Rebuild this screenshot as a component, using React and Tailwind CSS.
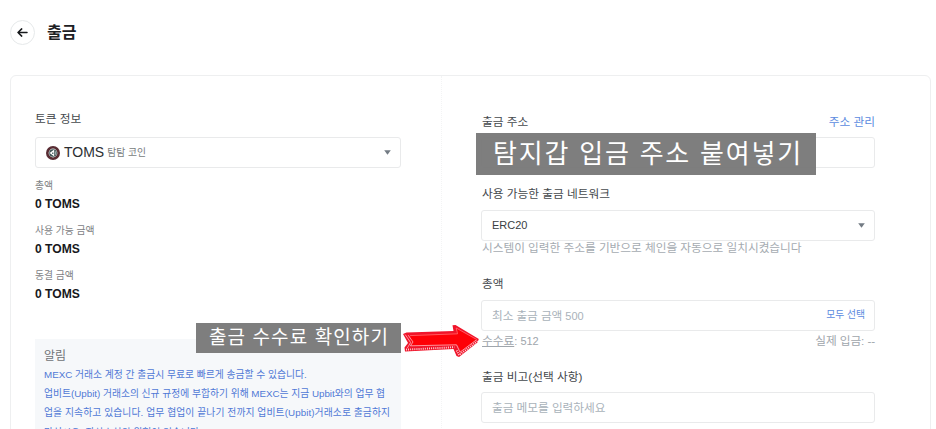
import React from "react";

const balances = [
  { label: "총액", value: "0 TOMS" },
  { label: "사용 가능 금액", value: "0 TOMS" },
  { label: "동결 금액", value: "0 TOMS" },
];

function Caret() {
  return (
    <svg width="7" height="5" viewBox="0 0 7 5" className="shrink-0">
      <path d="M0.2 0.3h6.6L3.5 4.8z" fill="#737b84" />
    </svg>
  );
}

function TokenLogo() {
  return (
    <svg width="14" height="14" viewBox="0 0 14 14" className="shrink-0">
      <circle cx="7" cy="7" r="7" fill="#582c33" />
      <circle cx="7" cy="7" r="4.4" fill="#e3e8e8" />
      <circle cx="7" cy="7" r="3.8" fill="#3e5455" />
      <path d="M3.6 7.1 8.2 3.6v6.8z" fill="#fff" />
      <path d="M6.2 6.6h1.2v1.4H6.2z" fill="#3e5455" />
      <path d="M9.4 5.3v3.5" stroke="#b9c6c6" strokeWidth="0.8" />
    </svg>
  );
}

function Field({ children }) {
  return (
    <div className="flex h-[31px] items-center justify-between rounded-[3px] border border-[#e9eaeb] bg-white pl-[10px] pr-[9px] text-[11.7px]">
      {children}
    </div>
  );
}

function RedArrow() {
  return (
    <svg
      width="78"
      height="36"
      viewBox="0 0 78 36"
      className="absolute left-[402px] top-[323px]"
    >
      <path
        d="M1 11 4.5 9.5 51.5 8 50.5 2.2 53.5 2 76.8 16 75.5 19.5 57 34 54.5 33 51.5 26 3 28.6 2.5 24.5 6 20z"
        fill="#f0142a"
      />
      <path d="M8 12 54.5 10.2 54 4.8 74.8 16.4 59 28.5 56 22.2 10 22.8z" fill="#fe0006" />
      <path
        d="M3.2 11.6 8.6 19.5 5.2 25.2M6.2 12.2 11 19 8.4 22.8 54.5 21.8 58 29.2 74.5 16.8"
        fill="none"
        stroke="#ffb9be"
        strokeWidth="0.8"
      />
      <path
        d="M8 12.6 55.5 10.8 54.2 5 74.5 16.4"
        fill="none"
        stroke="#ff8087"
        strokeWidth="0.7"
      />
      <path
        d="M4 26.6 52.5 24.2M54.6 27.5 57 32 75.6 18.2"
        fill="none"
        stroke="#ffe3e5"
        strokeWidth="1.9"
        strokeDasharray="0.9 1.2"
      />
    </svg>
  );
}

export default function App() {
  return (
    <div className="relative h-[429px] w-[936px] overflow-hidden whitespace-nowrap bg-white font-['Liberation_Sans','Noto_Sans_CJK_KR',sans-serif] text-[#45494d]">
      <header className="flex h-[75px] items-start pl-[10px] pt-5">
        <button className="flex h-[25px] w-[25px] items-center justify-center rounded-full border border-[#e6e9ea]">
          <svg width="11" height="9" viewBox="0 0 11 9" fill="none">
            <path
              d="M10 4.5H1M4.7 0.9 1 4.5l3.7 3.6"
              stroke="#17191c"
              strokeWidth="1.5"
              strokeLinecap="round"
              strokeLinejoin="round"
            />
          </svg>
        </button>
        <h1 className="ml-3 text-[16px] font-bold leading-[26px] text-[#1d2023]">출금</h1>
      </header>

      <main className="ml-[10px] flex h-[380px] w-[921px] rounded-md border border-[#eeeff0]">
        <section className="w-[431px] border-r border-dotted border-[#f3f4f5] pl-6 pr-10 pt-[33px]">
          <h2 className="h-5 text-[11.7px] leading-5">토큰 정보</h2>
          <div className="mt-2">
            <Field>
              <div className="flex items-center">
                <TokenLogo />
                <span className="ml-1 text-[14px] text-[#2b2e31]">TOMS</span>
                <span className="ml-[3px] pt-px text-[9.8px] text-[#777c80]">탐탐 코인</span>
              </div>
              <Caret />
            </Field>
          </div>

          <div className="mt-[9px] flex flex-col gap-[9px]">
            {balances.map((b) => (
              <div key={b.label}>
                <div className="h-[18px] text-[9.8px] leading-[18px] text-[#7d8184]">{b.label}</div>
                <div className="h-[18px] text-[12.1px] font-bold leading-[18px] text-[#17191c]">
                  {b.value}
                </div>
              </div>
            ))}
          </div>

          <div className="mt-9 h-[120px] bg-[#f6f8fa] px-[9px] pt-2">
            <h3 className="h-[18px] text-[12px] leading-[18px] text-[#6f7376]">알림</h3>
            <div className="text-[9.8px] leading-[19.2px] text-[#5079d6]">
              <p>MEXC 거래소 계정 간 출금시 무료로 빠르게 송금할 수 있습니다.</p>
              <p className="tracking-[-0.02px]">
                업비트(Upbit) 거래소의 신규 규정에 부합하기 위해 MEXC는 지금 Upbit와의 업무 협
              </p>
              <p className="tracking-[0.08px]">
                업을 지속하고 있습니다. 업무 협업이 끝나기 전까지 업비트(Upbit)거래소로 출금하지
              </p>
              <p>마십시오. 자산소실의 위험이 있습니다.</p>
            </div>
          </div>
        </section>

        <section className="w-[433px] pl-[39px] pt-9 text-[11.7px]">
          <div className="flex h-5 items-center justify-between pl-px">
            <span>출금 주소</span>
            <a className="text-[#5b8be0]">주소 관리</a>
          </div>
          <div className="mt-[5px]">
            <Field />
          </div>

          <div className="mt-4 h-5 pl-px leading-5">사용 가능한 출금 네트워크</div>
          <div className="mt-[6px]">
            <Field>
              <span className="text-[11px] text-[#3a3e42]">ERC20</span>
              <Caret />
            </Field>
          </div>
          <div className="h-[14px] pl-px leading-[14px] tracking-[-0.03px] text-[#a5abb1]">
            시스템이 입력한 주소를 기반으로 체인을 자동으로 일치시켰습니다
          </div>

          <div className="mt-[19px] h-5 pl-px leading-5">총액</div>
          <div className="mt-[6px]">
            <Field>
              <span className="tracking-[-0.1px] text-[#a9b2ba]">
                최소 출금 금액 <span className="text-[11px]">500</span>
              </span>
              <a className="text-[9.8px] text-[#5b8be0]">모두 선택</a>
            </Field>
          </div>
          <div className="flex h-5 items-center justify-between pl-px text-[#a0a6ac]">
            <span>
              <span className="underline">수수료</span>
              <span className="text-[11px]">: 512</span>
            </span>
            <span className="tracking-[-0.1px]">실제 입금: --</span>
          </div>

          <div className="mt-4 h-5 pl-px leading-5">출금 비고(선택 사항)</div>
          <div className="mt-[5px]">
            <Field>
              <span className="tracking-[-0.05px] text-[#a9b2ba]">출금 메모를 입력하세요</span>
            </Field>
          </div>
        </section>
      </main>

      {/* guide captions over the form */}
      <div className="absolute left-[476px] top-[133px] flex h-[42px] w-[340px] items-center bg-[#777777]/95 pl-[17px] text-[26px] tracking-[1.8px] text-white">
        탐지갑 입금 주소 붙여넣기
      </div>
      <div className="absolute left-[196px] top-[323px] flex h-[30px] w-[205px] items-center bg-[#777777]/95 pl-[13px] pt-px text-[19px] tracking-[1.1px] text-white">
        출금 수수료 확인하기
      </div>
      <RedArrow />
    </div>
  );
}
